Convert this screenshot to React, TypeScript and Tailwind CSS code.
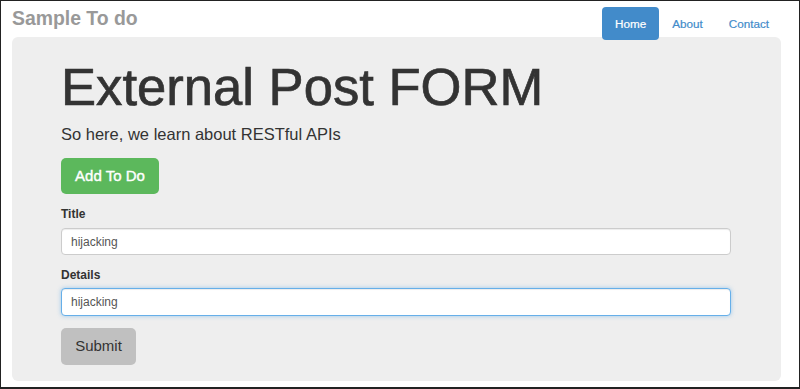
import React from 'react';

const navItems = ['Home', 'About', 'Contact'];

export default function App() {
  return (
    <div className="w-[800px] h-[389px] overflow-hidden border border-b-2 border-[#222] bg-white font-['Liberation_Sans',Arial,sans-serif] text-[#333]">
      {/* top bar */}
      <div className="flex h-[36px] items-start justify-between pl-[11px] pr-[17px] pt-[6px]">
        <div className="mt-[1px] text-[19.4px] font-bold leading-[21px] text-[#999]">Sample To do</div>
        <ul className="relative z-10 flex">
          {navItems.map((item, i) => (
            <li key={item}>
              <a
                href="#"
                className={`block h-[33px] rounded-[4px] px-[13px] text-[11.7px] leading-[33px] [-webkit-text-stroke:0.2px_currentColor] ${
                  i === 0 ? 'bg-[#428bca] text-white' : 'text-[#428bca]'
                }`}
              >
                {item}
              </a>
            </li>
          ))}
        </ul>
      </div>

      {/* jumbotron */}
      <div className="ml-[11px] h-[344px] w-[769px] rounded-[6px] bg-[#eeeeee] pl-[49px] pr-[50px] pt-[21px]">
        <h1 className="text-[52.6px] leading-[57px] font-normal text-[#333] [-webkit-text-stroke:0.7px_#333]">External Post FORM</h1>
        <p className="mt-[7px] text-[16.5px] leading-[24px] text-[#333]">So here, we learn about RESTful APIs</p>
        <button className="mt-[12px] flex h-[36px] w-[98px] items-center justify-center rounded-[5px] bg-[#5cb85c] text-[15px] text-white [-webkit-text-stroke:0.4px_#fff]">
          Add To Do
        </button>

        <form onSubmit={e => e.preventDefault()}>
          <label className="mt-[12px] block text-[12px] font-bold leading-[17px] text-[#333]">Title</label>
          <input
            className="mt-[5px] block h-[27px] w-full rounded-[4px] border border-[#ccc] bg-white pl-[9px] text-[12px] text-[#555] shadow-[inset_0_1px_1px_rgba(0,0,0,0.075)] outline-none"
            defaultValue="hijacking"
          />
          <label className="mt-[12px] block text-[12px] font-bold leading-[17px] text-[#333]">Details</label>
          <input
            className="mt-[4px] block h-[28px] w-full rounded-[4px] border border-[#66afe9] bg-white pl-[9px] text-[12px] text-[#555] shadow-[inset_0_1px_1px_rgba(0,0,0,0.075),0_0_4px_rgba(102,175,233,0.6)] outline-none"
            defaultValue="hijacking"
          />
          <button
            type="submit"
            className="mt-[12px] flex h-[37px] w-[75px] items-center justify-center rounded-[5px] bg-[#c0c0c0] text-[15px] text-[#333]"
          >
            Submit
          </button>
        </form>
      </div>
    </div>
  );
}
